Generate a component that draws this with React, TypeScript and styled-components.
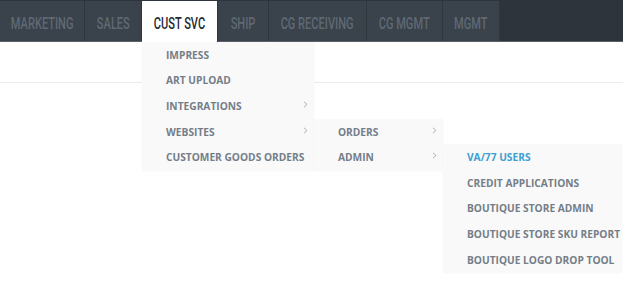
import styled, { createGlobalStyle } from 'styled-components'

const GlobalStyle = createGlobalStyle`
  html, body {
    margin: 0;
    padding: 0;
    background: #ffffff;
  }
  body {
    font-family: 'Open Sans', 'DejaVu Sans', sans-serif;
  }
`

type MenuNode = {
  label: string
  active?: boolean
  open?: boolean
  children?: MenuNode[]
}

// widths measured off the bar, separator included
const tabs = [
  {label: 'MARKETING', width: 85},
  {label: 'SALES', width: 57},
  {label: 'CUST SVC', width: 76},
  {label: 'SHIP', width: 51},
  {label: 'CG RECEIVING', width: 98},
  {label: 'CG MGMT', width: 76},
  {label: 'MGMT', width: 57},
]

const custSvcMenu: MenuNode[] = [
  {label: 'IMPRESS'},
  {label: 'ART UPLOAD'},
  {label: 'INTEGRATIONS', children: []},
  {
    label: 'WEBSITES',
    open: true,
    children: [
      {label: 'ORDERS', children: []},
      {
        label: 'ADMIN',
        open: true,
        children: [
          {label: 'VA/77 USERS', active: true},
          {label: 'CREDIT APPLICATIONS'},
          {label: 'BOUTIQUE STORE ADMIN'},
          {label: 'BOUTIQUE STORE SKU REPORT'},
          {label: 'BOUTIQUE LOGO DROP TOOL'},
        ],
      },
    ],
  },
  {label: 'CUSTOMER GOODS ORDERS'},
]

const Chevron = () => (
  <ChevronIcon width="5" height="7" viewBox="0 0 5 7">
    <polyline points="1,0.8 4,3.5 1,6.2" fill="none" stroke="#a9b0b7" strokeWidth="1" />
  </ChevronIcon>
)

const Menu = ({items, width, nested}: {items: MenuNode[]; width: number; nested?: boolean}) => (
  <MenuPanel $width={width} $nested={nested}>
    {items.map((item) => (
      <MenuItem key={item.label} $active={item.active}>
        <span>{item.label}</span>
        {item.children && <Chevron />}
        {item.open && item.children && item.children.length > 0 && (
          <Menu
            items={item.children}
            width={item.label === 'WEBSITES' ? 129 : 179}
            nested
          />
        )}
      </MenuItem>
    ))}
  </MenuPanel>
)

const App = () => {
  return (
    <>
      <GlobalStyle />
      <Page>
        <NavBar>
          {tabs.map((tab) => {
            const selected = tab.label === 'CUST SVC'
            return (
              <Tab key={tab.label} $width={tab.width} $selected={selected}>
                <TabLabel $selected={selected}>{tab.label}</TabLabel>
                {selected && <Menu items={custSvcMenu} width={172} />}
              </Tab>
            )
          })}
        </NavBar>
        <Content>
          <ContentHeader />
        </Content>
      </Page>
    </>
  )
}

export default App

const Page = styled.div`
  width: 623px;
  height: 283px;
  overflow: hidden;
  background: #ffffff;
`

const NavBar = styled.nav`
  display: flex;
  align-items: flex-end;
  height: 41px;
  background: #2e343b;
  border-bottom: 1px solid #596068;
`

const Tab = styled.div<{ $width: number; $selected?: boolean }>`
  position: relative;
  box-sizing: border-box;
  display: flex;
  align-items: center;
  justify-content: center;
  width: ${({$width}) => $width}px;
  height: ${({$selected}) => ($selected ? '41px' : '40px')};
  margin-bottom: ${({$selected}) => ($selected ? '-1px' : '0')};
  border-right: 1px solid #30363d;
  background: ${({$selected}) => ($selected ? '#ffffff' : '#3a424b')};
  cursor: default;
`

const TabLabel = styled.span<{ $selected?: boolean }>`
  display: inline-block;
  margin-top: 3px;
  font-family: 'Roboto', 'DejaVu Sans', sans-serif;
  font-size: 17px;
  font-weight: 500;
  color: ${({$selected}) => ($selected ? '#262b31' : '#5f6973')};
  white-space: nowrap;
  transform: scaleX(0.65);
`

const MenuPanel = styled.ul<{ $width: number; $nested?: boolean }>`
  position: absolute;
  top: ${({$nested}) => ($nested ? '0' : '100%')};
  left: ${({$nested}) => ($nested ? '100%' : '0')};
  width: ${({$width}) => $width}px;
  margin: 0;
  padding: 0;
  list-style: none;
  background: #f9f9f9;
  box-shadow: 0 1px 2px rgba(0, 0, 0, 0.04);
  z-index: 10;
`

const MenuItem = styled.li<{ $active?: boolean }>`
  position: relative;
  display: flex;
  align-items: center;
  justify-content: space-between;
  height: 25.6px;
  padding: 0 6px 0 24px;
  font-family: 'Open Sans', 'DejaVu Sans', sans-serif;
  font-size: 10.2px;
  font-weight: 700;
  color: ${({$active}) => ($active ? '#3c9fd3' : '#747e88')};
  white-space: nowrap;
`

const ChevronIcon = styled.svg`
  flex: none;
  margin-top: -3px;
`

const Content = styled.main`
  padding: 0;
`

const ContentHeader = styled.div`
  height: 40px;
  border-bottom: 1px solid #ececec;
`
